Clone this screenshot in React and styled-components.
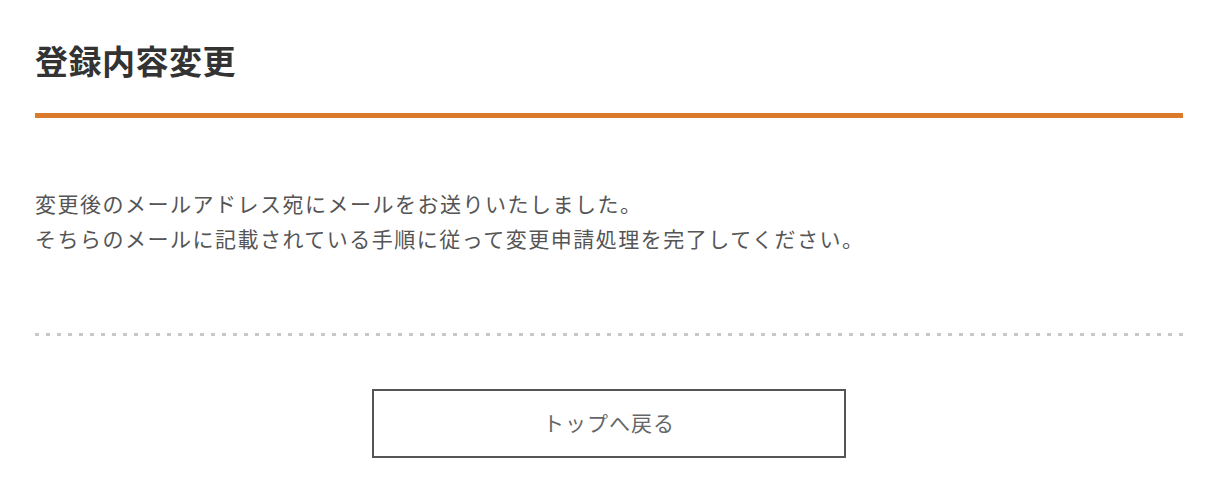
import React from 'react';
import styled, { createGlobalStyle } from 'styled-components';

const GlobalStyle = createGlobalStyle`
  body {
    margin: 0;
    background: #fff;
    font-family: "Noto Sans CJK JP", "Noto Sans", sans-serif;
    color: #555;
  }
`;

// --- Styled Components ---
const Page = styled.main`
  width: 1148px;
  margin-left: 35px;
  padding-top: 36px;
`;

const Header = styled.header`
  border-bottom: 5px solid #dc7a2b;
  padding-bottom: 29px;
`;

const Title = styled.h1`
  margin: 0;
  font-size: 33px;
  line-height: 48px;
  font-weight: 700;
  letter-spacing: 0.5px;
  color: #333;
`;

const Message = styled.p`
  margin: 68px 0 0;
  font-size: 21px;
  line-height: 35px;
  letter-spacing: 1.5px;
  color: #555;
`;

const Divider = styled.hr`
  margin: 77px 0 0;
  border: 0;
  height: 3px;
  background: repeating-linear-gradient(
    to right,
    #c8c8c8 0,
    #c8c8c8 4px,
    transparent 4px,
    transparent 11px
  );
`;

const Actions = styled.div`
  display: flex;
  justify-content: center;
  padding-top: 53px;
`;

const BackButton = styled.a`
  box-sizing: border-box;
  width: 474px;
  height: 69px;
  padding-bottom: 4px;
  display: flex;
  align-items: center;
  justify-content: center;
  border: 2px solid #555;
  font-size: 21px;
  letter-spacing: 1px;
  color: #666;
  text-decoration: none;
  cursor: pointer;
`;

// --- Component ---
const App = () => (
  <>
    <GlobalStyle />
    <Page>
      <Header>
        <Title>登録内容変更</Title>
      </Header>
      <Message>
        変更後のメールアドレス宛にメールをお送りいたしました。
        <br />
        そちらのメールに記載されている手順に従って変更申請処理を完了してください。
      </Message>
      <Divider />
      <Actions>
        <BackButton href="#">トップへ戻る</BackButton>
      </Actions>
    </Page>
  </>
);

export default App;
